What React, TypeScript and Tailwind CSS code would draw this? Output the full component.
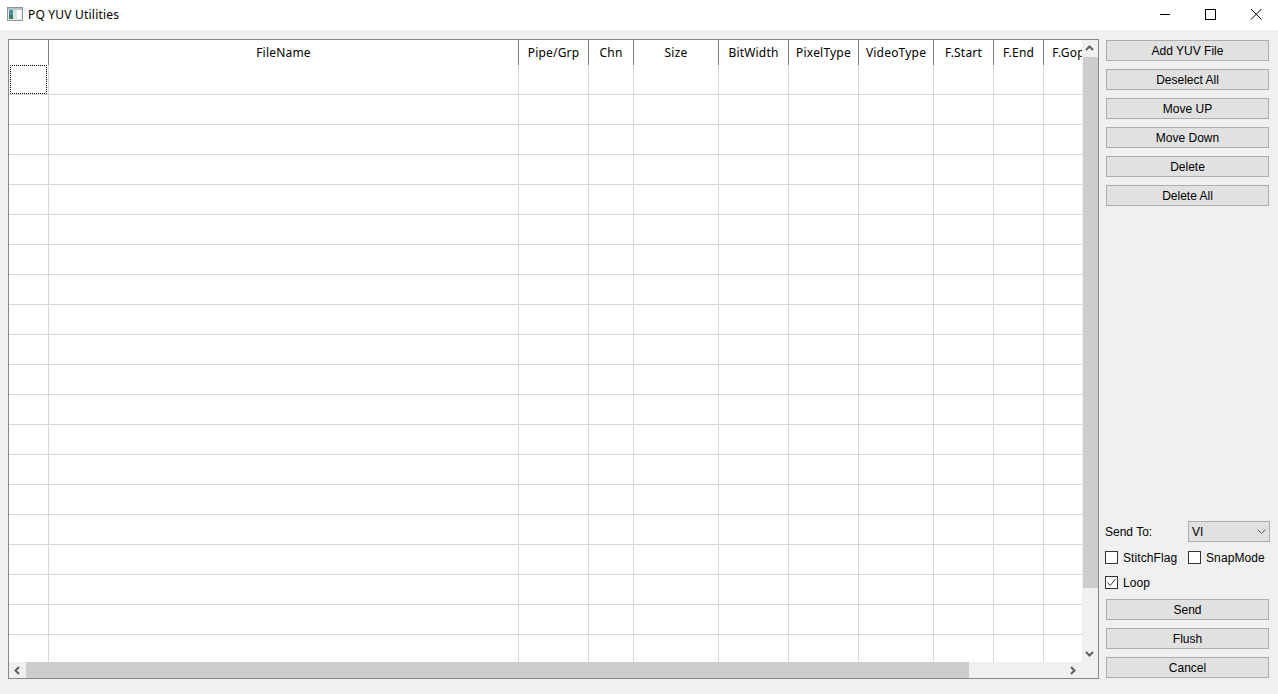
import React from 'react';

const headerFont = "font-['Noto_Sans',sans-serif] tracking-[0.2px]";
const uiFont = "font-['Liberation_Sans',sans-serif]";

const columns = [
  { name: '', width: 'w-[40px]' },
  { name: 'FileName', width: 'w-[470px]' },
  { name: 'Pipe/Grp', width: 'w-[70px]' },
  { name: 'Chn', width: 'w-[45px]' },
  { name: 'Size', width: 'w-[85px]' },
  { name: 'BitWidth', width: 'w-[70px]' },
  { name: 'PixelType', width: 'w-[70px]' },
  { name: 'VideoType', width: 'w-[75px]' },
  { name: 'F.Start', width: 'w-[60px]' },
  { name: 'F.End', width: 'w-[50px]' },
  { name: 'F.Gop', width: 'w-[50px]' },
];

const rows = Array.from({ length: 20 }, (_, i) => i);

const AppIcon = () => (
  <svg width="16" height="14" viewBox="0 0 16 14" className="shrink-0">
    <rect x="0.5" y="0.5" width="15" height="13" fill="#e8e8e8" stroke="#8f979e" />
    <rect x="1" y="1" width="14" height="2" fill="#b8c4cc" />
    <rect x="2" y="3" width="4" height="9" fill="#4d8f96" />
    <rect x="2" y="8" width="4" height="4" fill="#3f7d62" />
    <rect x="6" y="3" width="4" height="9" fill="#d5e6e4" />
    <rect x="10" y="3" width="4" height="9" fill="#ffffff" />
  </svg>
);

const Arrow = ({ d }: { d: string }) => (
  <svg width="9" height="9" viewBox="0 0 9 9" className="block">
    <path d={d} fill="none" stroke="#606060" strokeWidth="2" />
  </svg>
);

const Button = ({ label }: { label: string }) => (
  <button className="h-[21px] w-[163px] bg-[#e1e1e1] border border-[#adadad] text-[12px] leading-none text-black">
    {label}
  </button>
);

const Check = ({ label, checked, className }: { label: string; checked?: boolean; className?: string }) => (
  <label className={`flex items-center gap-[5px] text-[12px] tracking-[0.1px] text-black ${className ?? ''}`}>
    <span className="w-[13px] h-[13px] border border-[#333333] bg-white flex items-center justify-center">
      {checked && (
        <svg width="11" height="11" viewBox="0 0 11 11">
          <path d="M1.5 5.5 L4.2 8.5 L9.5 2" fill="none" stroke="#333333" strokeWidth="1" />
        </svg>
      )}
    </span>
    {label}
  </label>
);

export default function App() {
  return (
    <div className={`w-[1278px] h-[694px] overflow-hidden bg-[#f0f0f0] flex flex-col ${uiFont}`}>
      {/* title bar */}
      <div className="h-[30px] bg-white flex items-center shrink-0">
        <div className="ml-[7px] mb-[2px]">
          <AppIcon />
        </div>
        <span className={`ml-[5px] text-[12px] text-black ${headerFont}`}>PQ YUV Utilities</span>
        <div className="ml-auto flex items-center">
          <svg width="46" height="30" viewBox="0 0 46 30">
            <path d="M20 14.5 H30" stroke="#000" strokeWidth="1" />
          </svg>
          <svg width="46" height="30" viewBox="0 0 46 30">
            <rect x="19.5" y="9.5" width="10" height="10" fill="none" stroke="#000" strokeWidth="1" />
          </svg>
          <svg width="46" height="30" viewBox="0 0 46 30">
            <path d="M19 9 L29.5 19.5 M29.5 9 L19 19.5" stroke="#000" strokeWidth="1" />
          </svg>
        </div>
      </div>

      <div className="flex pt-[9px] pl-[8px]">
        {/* table */}
        <div className="w-[1091px] h-[640px] border border-[#828790] flex flex-col shrink-0">
          <div className="flex h-[622px]">
            <div className="w-[1073px] bg-white overflow-hidden">
              <div className={`flex h-[25px] w-[1115px] ${headerFont}`}>
                {columns.map((c) => (
                  <div
                    key={c.name}
                    className={`${c.width} shrink-0 border-r border-[#808080] text-[12px] text-black flex items-center justify-center whitespace-nowrap`}
                  >
                    {c.name}
                  </div>
                ))}
              </div>
              {rows.map((r) => (
                <div key={r} className="flex h-[30px] w-[1115px] border-b border-[#d8d8d8]">
                  {columns.map((c, i) => (
                    <div key={c.name} className={`${c.width} shrink-0 border-r border-[#d8d8d8] relative`}>
                      {r === 0 && i === 0 && (
                        <svg width="37" height="29" viewBox="0 0 37 29" className="absolute left-[1px] top-0">
                          <rect
                            x="0.5"
                            y="0.5"
                            width="36"
                            height="28"
                            fill="none"
                            stroke="#000"
                            strokeWidth="1"
                            strokeDasharray="1 1"
                            strokeDashoffset="0.5"
                          />
                        </svg>
                      )}
                    </div>
                  ))}
                </div>
              ))}
            </div>
            {/* vertical scrollbar */}
            <div className="w-[16px] flex flex-col items-start">
              <div className="h-[17px] w-[15px] flex items-center justify-center">
                <Arrow d="M1 6 L4.5 2.5 L8 6" />
              </div>
              <div className="h-[531px] w-[15px] ml-[1px] bg-[#cdcdcd]" />
              <div className="flex-1 w-[15px] flex items-end justify-center pb-[4px]">
                <Arrow d="M1 3 L4.5 6.5 L8 3" />
              </div>
            </div>
          </div>
          {/* horizontal scrollbar */}
          <div className="flex-1 flex items-stretch">
            <div className="w-[17px] flex items-center justify-center">
              <Arrow d="M6 1 L2.5 4.5 L6 8" />
            </div>
            <div className="w-[943px] bg-[#cdcdcd]" />
            <div className="w-[112px] flex items-center justify-end pr-[4px]">
              <Arrow d="M3 1 L6.5 4.5 L3 8" />
            </div>
          </div>
        </div>

        {/* side panel */}
        <div className="ml-[7px] w-[164px] h-[639px] pt-px flex flex-col justify-between">
          <div className="flex flex-col gap-[8px]">
            {['Add YUV File', 'Deselect All', 'Move UP', 'Move Down', 'Delete', 'Delete All'].map((b) => (
              <Button key={b} label={b} />
            ))}
          </div>
          <div className="flex flex-col">
            <div className="flex items-center h-[21px] -ml-px">
              <span className="text-[12px] text-black w-[83px]">Send To:</span>
              <div className="w-[82px] h-[21px] bg-[#e1e1e1] border border-[#adadad] flex items-center justify-between pl-[3px] pr-[3px] text-[12px] text-black">
                VI
                <svg width="9" height="5" viewBox="0 0 9 5">
                  <path d="M0.5 0.5 L4.5 4.5 L8.5 0.5" fill="none" stroke="#555" strokeWidth="1" />
                </svg>
              </div>
            </div>
            <div className="flex mt-[9px] h-[13px] -ml-px">
              <Check label="StitchFlag" className="w-[83px]" />
              <Check label="SnapMode" />
            </div>
            <Check label="Loop" checked className="mt-[12px] h-[13px] -ml-px" />
            <div className="flex flex-col gap-[8px] mt-[10px]">
              {['Send', 'Flush', 'Cancel'].map((b) => (
                <Button key={b} label={b} />
              ))}
            </div>
          </div>
        </div>
      </div>
    </div>
  );
}
